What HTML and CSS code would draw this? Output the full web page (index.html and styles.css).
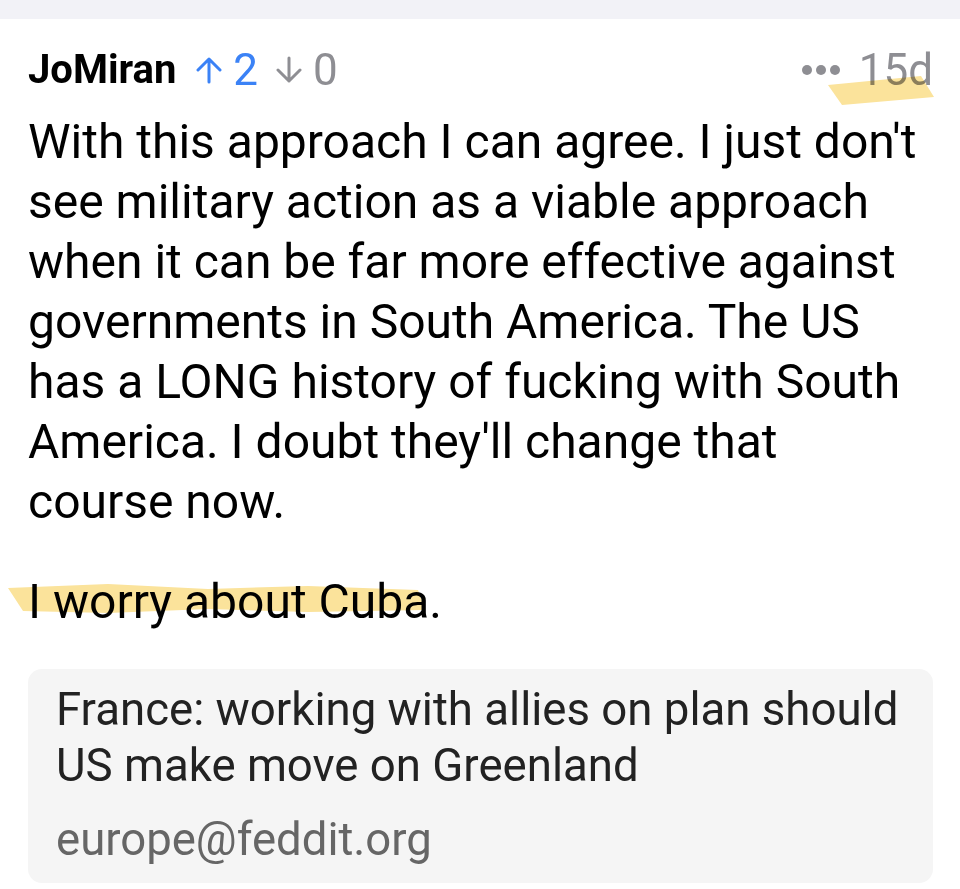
FILE: index.html
```html
<!DOCTYPE html>
<html>
<head>
<meta charset="utf-8">
<link rel="stylesheet" href="styles.css">
</head>
<body>
<div class="topbar"></div>
<div class="comment">
  <div class="header">
    <div class="left">
      <span class="name">JoMiran</span>
      <span class="vote up">
        <svg class="arrow" viewBox="0 0 26 28" width="26" height="28"><path d="M13 26V3M2 14L13 3l11 11" fill="none" stroke="currentColor" stroke-width="3" stroke-linecap="round" stroke-linejoin="round"/></svg>
        <span>2</span>
      </span>
      <span class="vote down">
        <svg class="arrow" viewBox="0 0 26 28" width="26" height="28"><path d="M13 2v23M2 14l11 11 11-11" fill="none" stroke="currentColor" stroke-width="3" stroke-linecap="round" stroke-linejoin="round"/></svg>
        <span>0</span>
      </span>
    </div>
    <div class="right">
      <span class="dots"><i></i><i></i><i></i></span>
      <span class="age">15d</span>
    </div>
  </div>
  <div class="body">
    <p>With this approach I can agree. I just don't see military action as a viable approach when it can be far more effective against governments in South America. The US has a LONG history of fucking with South America. I doubt they'll change that course now.</p>
    <p>I worry about Cuba.</p>
  </div>
  <div class="card">
    <div class="card-title">France: working with allies on plan should US make move on Greenland</div>
    <div class="card-domain">europe@feddit.org</div>
  </div>
</div>
<svg class="mark mark-age" width="110" height="40" viewBox="0 0 110 40"><polygon points="2,12 95,3 108,24 16,32" /></svg>
<svg class="mark mark-cuba" width="430" height="40" viewBox="0 0 430 40"><polygon points="0,7 100,3 200,8 300,5 410,9 417,29 300,31 200,28 100,32 15,30" /></svg>
</body>
</html>
```
FILE: styles.css
```css
html, body {
  margin: 0;
  padding: 0;
  background: #fff;
}
body {
  font-family: Roboto, "Noto Sans", sans-serif;
  width: 960px;
  height: 889px;
  overflow: hidden;
  position: relative;
}
.topbar {
  height: 19px;
  background: #f2f2f7;
}
.comment {
  padding: 0 27px 0 28px;
}
.header {
  box-sizing: border-box;
  display: flex;
  justify-content: space-between;
  align-items: center;
  height: 93px;
  padding-top: 8px;
}
.left, .right {
  display: flex;
  align-items: center;
}
.name {
  font-weight: 700;
  font-size: 40px;
  color: #000;
  margin-right: 20px;
}
.vote {
  display: flex;
  align-items: center;
  font-size: 44px;
  margin-right: 18px;
}
.vote .arrow {
  margin-right: 11px;
}
.up { color: #3b82f6; }
.down { color: #8e8e93; }
.dots {
  display: flex;
  gap: 4px;
  margin-right: 19px;
}
.dots i {
  width: 10px;
  height: 10px;
  border-radius: 50%;
  background: #8e8e93;
}
.age {
  font-size: 44px;
  color: #8e8e93;
}
.body p {
  margin: 0 0 40px;
  font-size: 48px;
  line-height: 60px;
  color: #000;
}
.body p:last-child {
  margin-bottom: 37px;
}
.card {
  background: #f5f5f5;
  border-radius: 14px;
  padding: 13px 24px 15px 28px;
}
.card-title {
  font-size: 45.6px;
  line-height: 56px;
  color: #222;
}
.card-domain {
  margin-top: 18px;
  font-size: 45.5px;
  line-height: 56px;
  color: #666;
}
.mark {
  position: absolute;
  mix-blend-mode: multiply;
}
.mark polygon {
  fill: #fbe39b;
}
.mark-age {
  left: 826px;
  top: 73px;
}
.mark-cuba {
  left: 8px;
  top: 581px;
}
```
